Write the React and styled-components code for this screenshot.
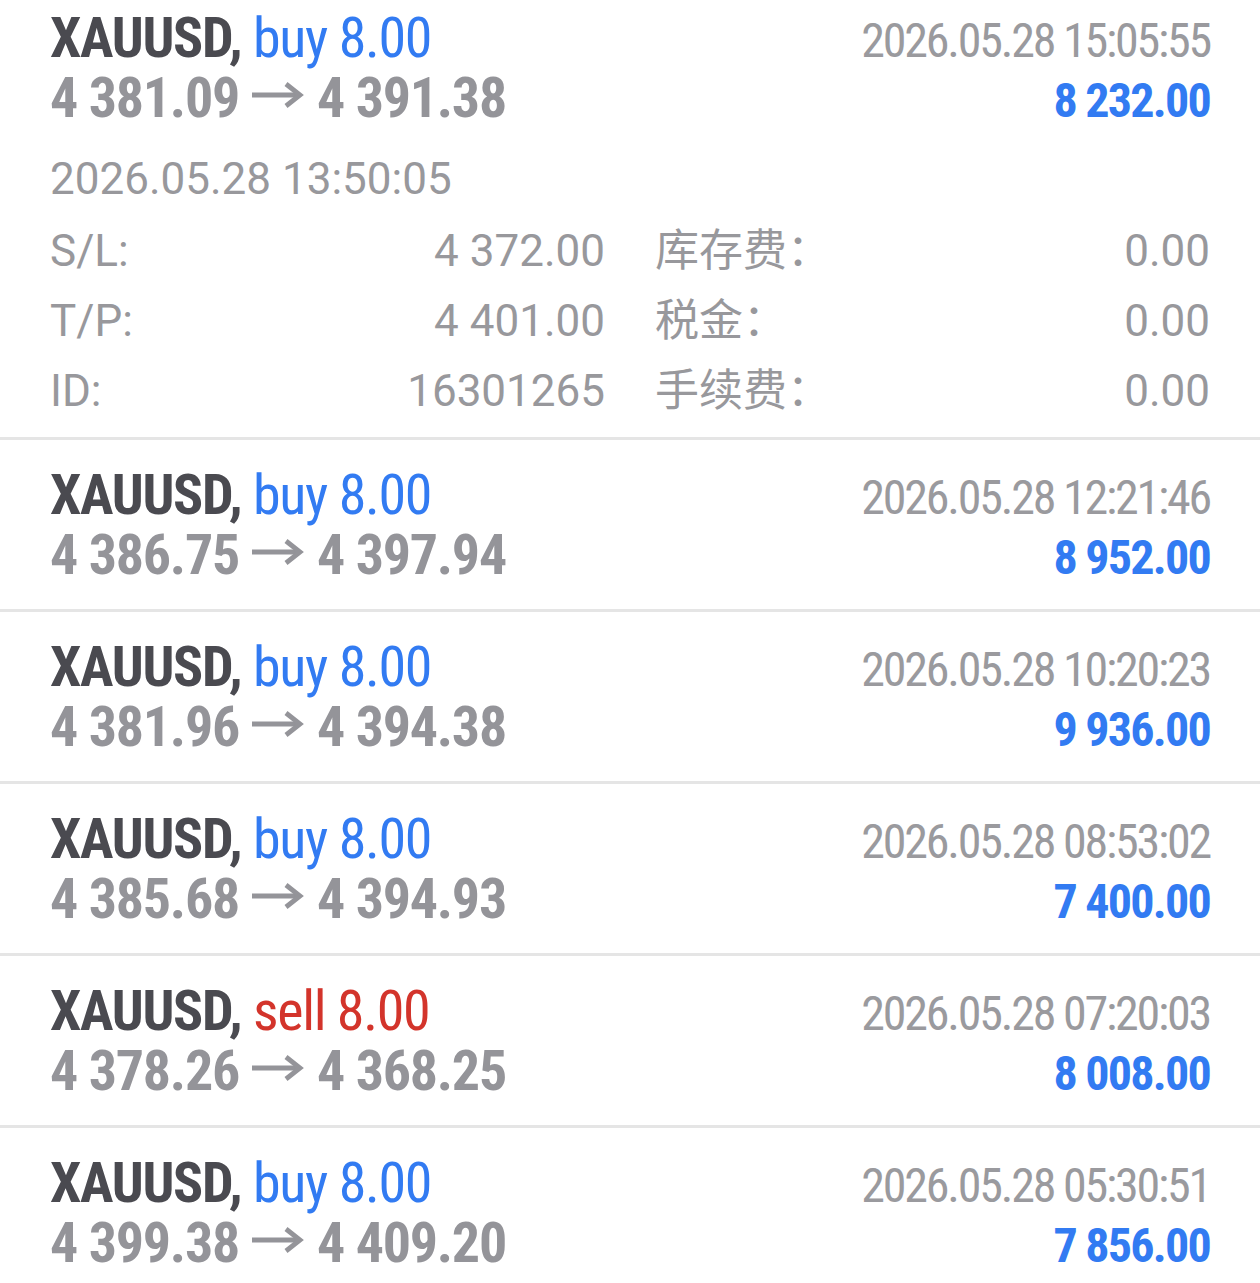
import styled, { createGlobalStyle } from 'styled-components';

const GlobalStyle = createGlobalStyle`
  html, body {
    margin: 0;
    padding: 0;
    background: #ffffff;
  }
  body {
    font-family: Roboto, 'Noto Sans CJK SC', sans-serif;
    overflow: hidden;
  }
`;

const trades = [
  { type: 'buy', open: '4 381.09', close: '4 391.38', time: '2026.05.28 15:05:55', profit: '8 232.00', expanded: true },
  { type: 'buy', open: '4 386.75', close: '4 397.94', time: '2026.05.28 12:21:46', profit: '8 952.00' },
  { type: 'buy', open: '4 381.96', close: '4 394.38', time: '2026.05.28 10:20:23', profit: '9 936.00' },
  { type: 'buy', open: '4 385.68', close: '4 394.93', time: '2026.05.28 08:53:02', profit: '7 400.00' },
  { type: 'sell', open: '4 378.26', close: '4 368.25', time: '2026.05.28 07:20:03', profit: '8 008.00' },
  { type: 'buy', open: '4 399.38', close: '4 409.20', time: '2026.05.28 05:30:51', profit: '7 856.00' },
];

const details = [
  ['S/L:', '4 372.00', '库存费：', '0.00'],
  ['T/P:', '4 401.00', '税金：', '0.00'],
  ['ID:', '16301265', '手续费：', '0.00'],
];

const ArrowIcon = () => (
  <Arrow width="52" height="26" viewBox="0 0 52 26" aria-hidden="true">
    <path d="M0 13H48" stroke="currentColor" strokeWidth="4.8" fill="none" />
    <path d="M34 2L48 13L34 24" stroke="currentColor" strokeWidth="4.8" fill="none" />
  </Arrow>
);

const App = () => (
  <>
    <GlobalStyle />
    <List>
      {trades.map((t, i) => (
        <Item key={i}>
          <Line>
            <Title>
              XAUUSD, <Side $type={t.type}>{t.type} 8.00</Side>
            </Title>
            <Time>{t.time}</Time>
          </Line>
          <Line>
            <Prices>
              {t.open}
              <ArrowIcon />
              {t.close}
            </Prices>
            <Profit>{t.profit}</Profit>
          </Line>
          {t.expanded && (
            <Details>
              <OpenTime>2026.05.28 13:50:05</OpenTime>
              <Grid>
                {details.flatMap(([a, b, c, d]) => [
                  <Cell key={a}>
                    <span>{a}</span>
                    <span>{b}</span>
                  </Cell>,
                  <Cell key={c}>
                    <span>{c}</span>
                    <span>{d}</span>
                  </Cell>,
                ])}
              </Grid>
            </Details>
          )}
        </Item>
      ))}
    </List>
  </>
);

const condensed = `
  font-family: 'Roboto Condensed', Roboto, sans-serif;
  font-stretch: 75%;
`;

const List = styled.div`
  margin-top: -17px;
`;

const Item = styled.div`
  padding: 25px 50px 24px;
  border-bottom: 3px solid #e5e5e5;
`;

const Line = styled.div`
  display: flex;
  justify-content: space-between;
  align-items: baseline;
  height: 60px;
  line-height: 60px;
  white-space: nowrap;
`;

const Title = styled.div`
  ${condensed}
  font-size: 56px;
  font-weight: 700;
  letter-spacing: -1.3px;
  color: #4a4a50;
`;

const Side = styled.span`
  font-weight: 400;
  color: ${(p) => (p.$type === 'sell' ? '#d3342b' : '#327bf2')};
`;

const Time = styled.div`
  ${condensed}
  font-size: 48px;
  letter-spacing: -2.2px;
  color: #9a9a9e;
`;

const Prices = styled.div`
  ${condensed}
  font-size: 56px;
  font-weight: 700;
  letter-spacing: -1.25px;
  color: #949499;
`;

const Arrow = styled.svg`
  display: inline-block;
  vertical-align: 9px;
  margin: 0 13px 0 13px;
`;

const Profit = styled.div`
  ${condensed}
  font-size: 48px;
  font-weight: 700;
  letter-spacing: -1.75px;
  color: #327bf2;
`;

const Details = styled.div`
  margin-top: 15px;
  margin-bottom: -13px;
  color: #98989c;
  font-size: 44px;
`;

const OpenTime = styled.div`
  line-height: 73px;
`;

const Grid = styled.div`
  display: grid;
  grid-template-columns: 1fr 1fr;
  column-gap: 50px;
`;

const Cell = styled.div`
  display: flex;
  justify-content: space-between;
  line-height: 70px;
  font-family: Roboto, 'Noto Sans CJK SC', sans-serif;
`;

export default App;
